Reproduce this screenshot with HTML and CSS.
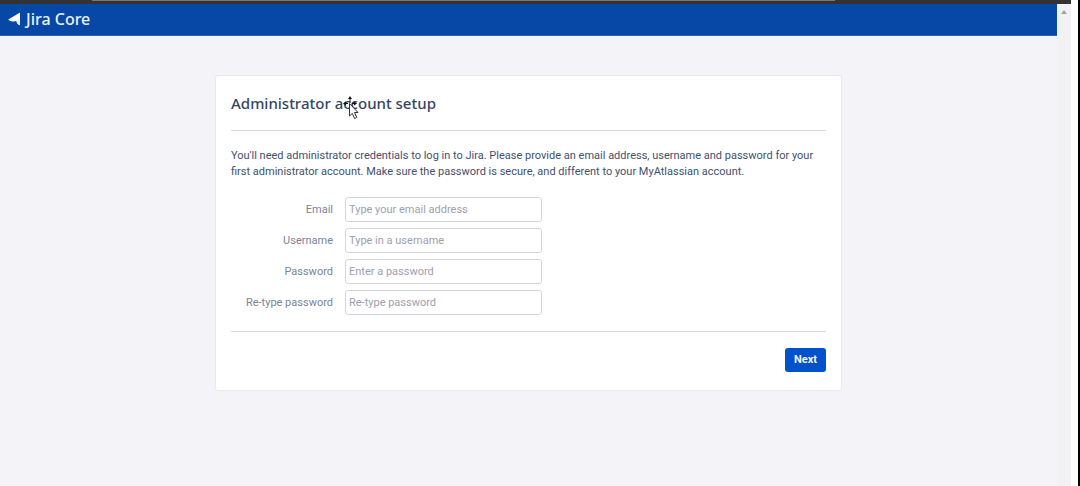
FILE: index.html
```html
<!DOCTYPE html>
<html lang="en">
<head>
<meta charset="utf-8">
<title>Jira Core - Administrator account setup</title>
<link rel="stylesheet" href="styles.css">
</head>
<body>
<div class="window-edge"><div class="window-tab"></div></div>
<div class="viewport">
  <div class="page">
    <header class="header">
      <svg class="logo" viewBox="0 0 13 14" aria-hidden="true">
        <path d="M12 0.5V13.2C9.6 12.4 8.6 10.9 8.5 9L5.8 9.4C3.2 9.6 1.2 9 0.3 7.6Z" fill="#fff"/>
        <path d="M8.5 9L12 5.8V13.2C9.6 12.4 8.6 10.9 8.5 9Z" fill="#e3ecfa"/>
      </svg>
      <span class="product">Jira Core</span>
    </header>
    <main class="main">
      <form class="card">
        <h1 class="title">Administrator account setup</h1>
        <p class="intro">You'll need administrator credentials to log in to Jira. Please provide an email address, username and password for your first administrator account. Make sure the password is secure, and different to your MyAtlassian account.</p>
        <div class="fields">
          <label class="label" for="email">Email</label>
          <input class="input" id="email" type="email" placeholder="Type your email address">
          <label class="label" for="username">Username</label>
          <input class="input" id="username" type="text" placeholder="Type in a username">
          <label class="label" for="password">Password</label>
          <input class="input" id="password" type="password" placeholder="Enter a password">
          <label class="label" for="confirm">Re-type password</label>
          <input class="input" id="confirm" type="password" placeholder="Re-type password">
        </div>
        <div class="actions"><button class="next" type="submit">Next</button></div>
        <svg class="cursor" viewBox="0 0 18 24" aria-hidden="true">
          <path d="M8 0L10 3H6ZM1 7.5L4 5.5V9.5ZM15 7.5L12 5.5V9.5Z" fill="#111"/>
          <path d="M8 2V7M3 7.5H6M10 7.5H13" stroke="#111"/>
          <path d="M7.5 7.5V20L10.3 17.4L12.6 22.5L14.8 21.5L12.5 16.5H16Z" fill="#fff" stroke="#333"/>
        </svg>
      </form>
    </main>
  </div>
  <div class="scrollbar"><svg class="scroll-up" viewBox="0 0 6 4" aria-hidden="true"><path d="M0 4L3 0L6 4Z" fill="#a3a3a3"/></svg></div>
</div>
</body>
</html>
```
FILE: styles.css
```css
* { box-sizing: border-box; }

body {
  margin: 0;
  min-height: 100vh;
  display: flex;
  flex-direction: column;
  background: #fff;
  border-right: 2px solid #000;
  color: #42506e;
  font-family: Roboto, sans-serif;
  font-size: 11px;
  line-height: 16px;
}

.window-edge {
  height: 4px;
  margin-right: 7px;
  background: #333;
}

.window-tab {
  height: 1px;
  margin: 0 22% 0 92px;
  background: #777;
}

.viewport {
  flex: 1;
  display: flex;
  margin-right: 7px;
}

.page {
  flex: 1;
  background: #f3f3f8;
}

.header {
  display: flex;
  align-items: center;
  gap: 5px;
  height: 32px;
  padding: 0 8px 1px;
  background: #0747a6;
  border-bottom: 1px solid #2e60b3;
  color: #eaf1fc;
}

.logo { width: 13px; height: 14px; }

.product {
  font-family: "Noto Sans", sans-serif;
  font-size: 16px;
  font-weight: 500;
  line-height: 20px;
}

.main {
  display: flex;
  justify-content: center;
  padding: 39px 16px;
}

.card {
  position: relative;
  width: 100%;
  max-width: 627px;
  padding: 15px;
  background: #fff;
  border: 1px solid #e8e9ee;
  border-radius: 3px;
}

.title {
  margin: 0;
  padding: 0 0 15px;
  border-bottom: 1px solid #d8dade;
  color: #344563;
  font-family: "Noto Sans", sans-serif;
  font-size: 15px;
  font-weight: 500;
  line-height: 24px;
}

.intro { margin: 17px 0; }

.fields {
  display: grid;
  grid-template-columns: 102px 197px;
  column-gap: 12px;
  row-gap: 6px;
  align-items: center;
  padding-bottom: 16px;
  border-bottom: 1px solid #d8dade;
}

.label {
  color: #7b8497;
  text-align: right;
}

.input {
  width: 100%;
  height: 25px;
  padding: 0 3px;
  background: #fff;
  border: 1px solid #d5d7df;
  border-radius: 3px;
  color: #42506e;
  font: inherit;
}

.input::placeholder { color: #9f9eaf; opacity: 1; }

.actions {
  display: flex;
  justify-content: flex-end;
  padding: 16px 0 3px;
}

.next {
  height: 24px;
  padding: 0 9px;
  background: #0052cc;
  border: 0;
  border-radius: 3px;
  color: #f2f6fd;
  font: inherit;
  font-weight: 700;
}

.cursor {
  position: absolute;
  left: 126px;
  top: 20px;
  width: 18px;
  height: 24px;
}

.scrollbar {
  width: 14px;
  padding: 6px 4px;
  background: #f2f1f4;
}

.scroll-up { display: block; width: 6px; height: 4px; }
```
